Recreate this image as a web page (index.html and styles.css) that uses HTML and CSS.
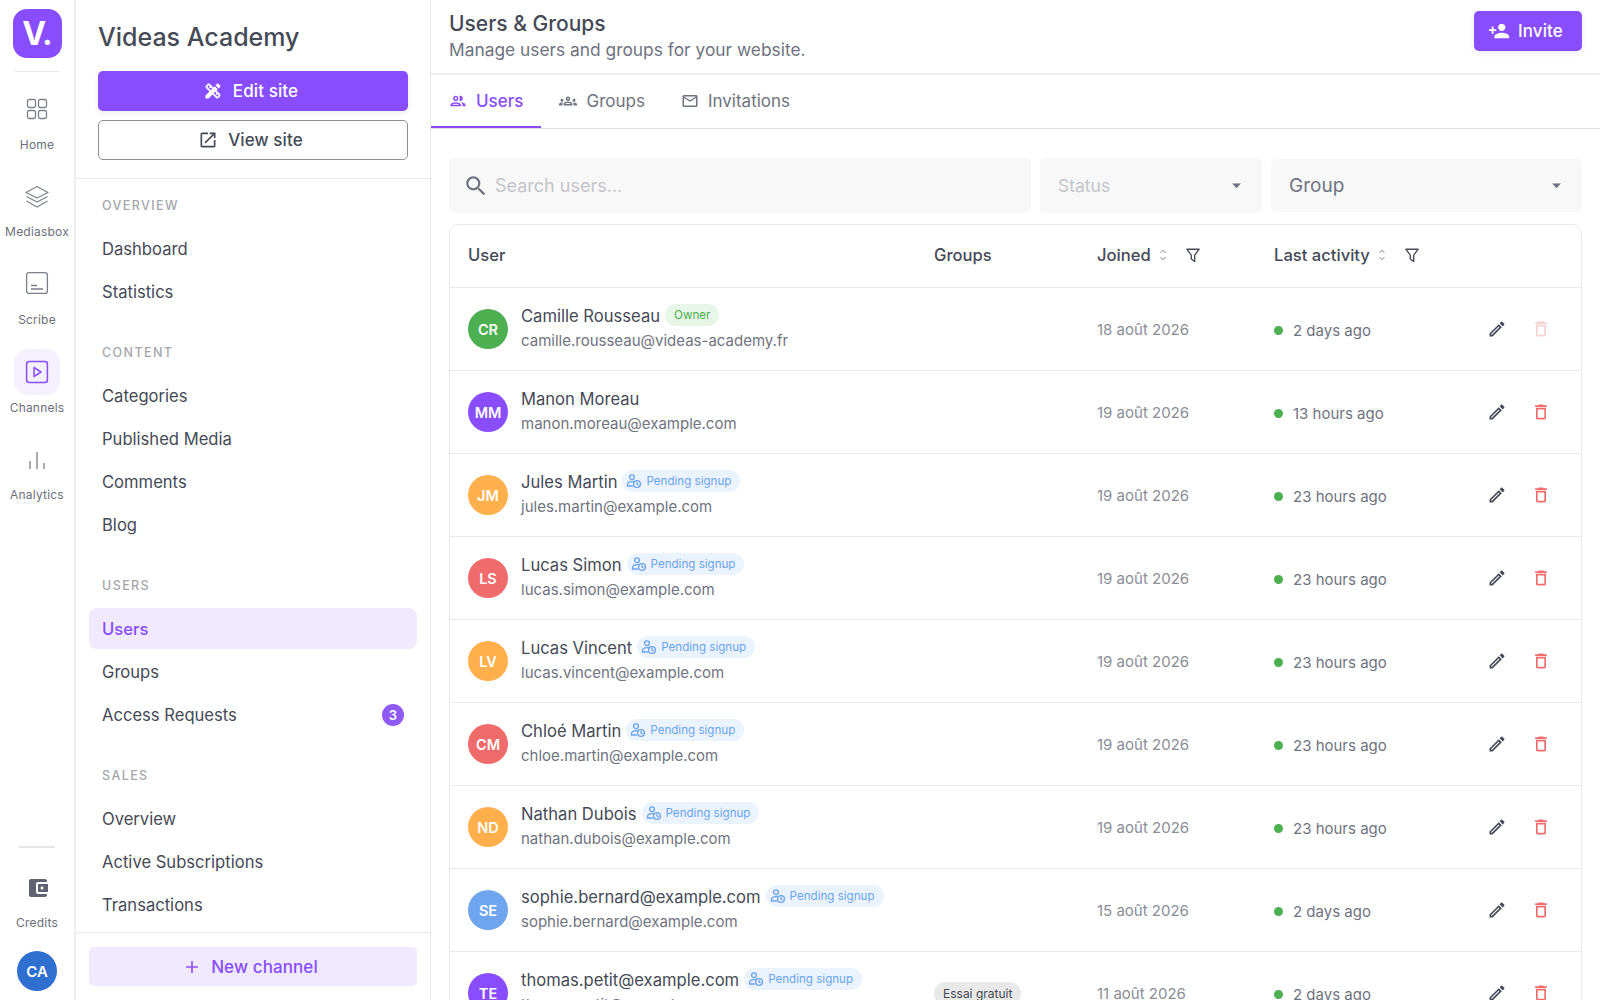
FILE: index.html
```html
<!DOCTYPE html>
<html lang="en">
<head>
  <meta charset="UTF-8">
  <title>Users &amp; Groups</title>
  <link rel="stylesheet" href="styles.css">
</head>
<body>
  <svg class="sprites" width="0" height="0">
    <symbol id="i-edit" viewBox="0 0 24 24"><path d="M3 17.25V21h3.75L17.81 9.94l-3.75-3.75L3 17.25zM5.92 19H5v-.92l9.06-9.06.92.92L5.92 19zM20.71 5.63l-2.34-2.34c-.2-.2-.45-.29-.71-.29s-.51.1-.7.29l-1.83 1.83 3.75 3.75 1.83-1.83c.39-.39.39-1.02 0-1.41z"/></symbol>
    <symbol id="i-trash" viewBox="0 0 24 24"><path d="M6 19c0 1.1.9 2 2 2h8c1.1 0 2-.9 2-2V7H6v12zM8 9h8v10H8V9zm7.5-5l-1-1h-5l-1 1H5v2h14V4h-3.5z"/></symbol>
    <symbol id="i-pending" viewBox="0 0 16 16"><g fill="none" stroke="currentColor" stroke-width="1.35" stroke-linecap="round"><circle cx="6" cy="4.2" r="2.4"/><path d="M1.5 13v-1c0-2 1.8-3.4 4.5-3.4.6 0 1.2.1 1.7.2M1.5 13h5"/><circle cx="11" cy="11" r="3.4"/><path d="M11 9.3V11l1.2.8"/></g></symbol>
    <symbol id="i-sort" viewBox="0 0 10 16"><path d="M2.5 6L5 3.2 7.5 6M2.5 10L5 12.8 7.5 10" fill="none" stroke="currentColor" stroke-width="1"/></symbol>
    <symbol id="i-filter" viewBox="0 0 16 16"><path d="M1.8 2.2h12.4L9.7 8.2v6.3L6.3 12V8.2z" fill="none" stroke="currentColor" stroke-width="1.35" stroke-linejoin="round"/></symbol>
    <symbol id="i-caret" viewBox="0 0 12 6"><path d="M1 0h10L6 5.5z"/></symbol>
  </svg>

  <nav class="rail">
    <div class="logo">V.</div>
    <div class="rail-line"></div>
    <div class="rail-items">
      <a class="rail-item">
        <span class="rail-icon"><svg width="24" height="24" viewBox="0 0 24 24" fill="none" stroke="currentColor" stroke-width="1.3"><rect x="2.5" y="2.5" width="8" height="8" rx="1.8"/><rect x="13.5" y="2.5" width="8" height="8" rx="1.8"/><rect x="2.5" y="13.5" width="8" height="8" rx="1.8"/><rect x="13.5" y="13.5" width="8" height="8" rx="1.8"/></svg></span>
        <span class="rail-label">Home</span>
      </a>
      <a class="rail-item">
        <span class="rail-icon"><svg width="24" height="24" viewBox="0 0 24 24" fill="none" stroke="currentColor" stroke-width="1.2" stroke-linejoin="round"><path d="M12 1.5L23 7.5 12 13 1 7.5z"/><path d="M1.5 11.5L12 17l10.5-5.5"/><path d="M1.5 16L12 22l10.5-6"/></svg></span>
        <span class="rail-label">Mediasbox</span>
      </a>
      <a class="rail-item">
        <span class="rail-icon"><svg class="up" width="24" height="24" viewBox="0 0 24 24" fill="none" stroke="currentColor" stroke-width="1.3"><rect x="1.6" y="1.6" width="20.8" height="20.8" rx="2.5"/><path d="M6 14.5h6M6 18h12"/></svg></span>
        <span class="rail-label">Scribe</span>
      </a>
      <a class="rail-item active">
        <span class="rail-icon"><svg width="24" height="24" viewBox="0 0 24 24" fill="none" stroke="currentColor" stroke-width="1.5" stroke-linejoin="round"><rect x="1.6" y="1.6" width="20.8" height="20.8" rx="2.5"/><path d="M9 7.5l7 4.5-7 4.5z"/></svg></span>
        <span class="rail-label">Channels</span>
      </a>
      <a class="rail-item">
        <span class="rail-icon"><svg width="24" height="24" viewBox="0 0 24 24" fill="none" stroke="currentColor" stroke-width="1.3"><path d="M5 21v-8M12 21V4M19 21v-6"/></svg></span>
        <span class="rail-label">Analytics</span>
      </a>
    </div>
    <div class="rail-bottom">
      <div class="rail-line short"></div>
      <a class="rail-item credits">
        <span class="rail-icon"><svg width="24" height="24" viewBox="0 0 24 24" fill="#5f6470"><path d="M21 18v1c0 1.1-.9 2-2 2H5c-1.11 0-2-.9-2-2V5c0-1.1.89-2 2-2h14c1.1 0 2 .9 2 2v1h-9c-1.11 0-2 .9-2 2v8c0 1.1.89 2 2 2h9zm-9-2h10V8H12v8zm4-2.5c-.83 0-1.5-.67-1.5-1.5s.67-1.5 1.5-1.5 1.5.67 1.5 1.5-.67 1.5-1.5 1.5z"/></svg></span>
        <span class="rail-label">Credits</span>
      </a>
      <div class="me">CA</div>
    </div>
  </nav>

  <aside class="sidebar">
    <div class="site">
      <h2>Videas Academy</h2>
      <button class="btn btn-primary"><svg width="20" height="20" viewBox="0 0 24 24" fill="currentColor"><path d="M16.24 11.51l1.57-1.57-3.75-3.75-1.57 1.57-4.14-4.13c-.78-.78-2.05-.78-2.83 0l-1.9 1.9c-.78.78-.78 2.05 0 2.83l4.13 4.13L3 17.25V21h3.75l4.76-4.76 4.13 4.13c.95.95 2.23.6 2.83 0l1.9-1.9c.78-.78.78-2.05 0-2.83l-4.13-4.13zm-7.06-.44L5.04 6.94l1.89-1.9L8.2 6.31 7.02 7.5l1.41 1.41 1.19-1.19 1.45 1.45-1.89 1.9zm7.88 7.89l-4.13-4.14 1.9-1.9 1.45 1.45-1.19 1.19 1.41 1.41 1.19-1.19 1.27 1.27-1.9 1.91zm3.65-11.92c.39-.39.39-1.02 0-1.41l-2.34-2.34c-.47-.47-1.12-.29-1.41 0l-1.83 1.83 3.75 3.75 1.83-1.83z"/></svg>Edit site</button>
      <button class="btn btn-outline"><svg width="20" height="20" viewBox="0 0 24 24" fill="currentColor"><path d="M19 19H5V5h7V3H5c-1.11 0-2 .9-2 2v14c0 1.1.89 2 2 2h14c1.1 0 2-.9 2-2v-7h-2v7zM14 3v2h3.59l-9.83 9.83 1.41 1.41L19 6.41V10h2V3h-7z"/></svg>View site</button>
    </div>
    <div class="menu">
      <div class="menu-group">
        <div class="menu-title">Overview</div>
        <a class="menu-item">Dashboard</a>
        <a class="menu-item">Statistics</a>
      </div>
      <div class="menu-group">
        <div class="menu-title">Content</div>
        <a class="menu-item">Categories</a>
        <a class="menu-item">Published Media</a>
        <a class="menu-item">Comments</a>
        <a class="menu-item">Blog</a>
      </div>
      <div class="menu-group">
        <div class="menu-title">Users</div>
        <a class="menu-item active">Users</a>
        <a class="menu-item">Groups</a>
        <a class="menu-item">Access Requests <span class="count">3</span></a>
      </div>
      <div class="menu-group">
        <div class="menu-title">Sales</div>
        <a class="menu-item">Overview</a>
        <a class="menu-item">Active Subscriptions</a>
        <a class="menu-item">Transactions</a>
      </div>
    </div>
    <div class="sidebar-foot">
      <button class="btn btn-soft"><svg width="18" height="18" viewBox="0 0 18 18" fill="none" stroke="currentColor" stroke-width="1.6"><path d="M9 3v12M3 9h12"/></svg>New channel</button>
    </div>
  </aside>

  <main class="main">
    <header class="top">
      <div>
        <h1>Users &amp; Groups</h1>
        <p>Manage users and groups for your website.</p>
      </div>
      <button class="btn btn-primary btn-invite"><svg width="22" height="22" viewBox="0 0 24 24" fill="currentColor"><path d="M15 12c2.21 0 4-1.79 4-4s-1.79-4-4-4-4 1.79-4 4 1.79 4 4 4zm-9-2V7H4v3H1v2h3v3h2v-3h3v-2H6zm9 4c-2.67 0-8 1.34-8 4v2h16v-2c0-2.66-5.33-4-8-4z"/></svg>Invite</button>
    </header>

    <div class="tabs">
      <a class="tab active"><svg width="18" height="18" viewBox="0 0 24 24" fill="currentColor"><path d="M9 13.75c-2.34 0-7 1.17-7 3.5V19h14v-1.75c0-2.33-4.66-3.5-7-3.5zM4.34 17c.84-.58 2.87-1.25 4.66-1.25s3.82.67 4.66 1.25H4.34zM9 12c1.93 0 3.5-1.57 3.5-3.5S10.93 5 9 5 5.5 6.57 5.5 8.5 7.07 12 9 12zm0-5c.83 0 1.5.67 1.5 1.5S9.83 10 9 10s-1.5-.67-1.5-1.5S8.17 7 9 7zm7.04 6.81c1.16.84 1.96 1.96 1.96 3.44V19h4v-1.75c0-2.02-3.5-3.17-5.96-3.44zM15 12c1.93 0 3.5-1.57 3.5-3.5S16.93 5 15 5c-.54 0-1.04.13-1.5.35.63.89 1 1.98 1 3.15s-.37 2.26-1 3.15c.46.22.96.35 1.5.35z"/></svg>Users</a>
      <a class="tab"><svg width="18" height="18" viewBox="0 0 24 24" fill="currentColor"><path d="M4 13c1.1 0 2-.9 2-2s-.9-2-2-2-2 .9-2 2 .9 2 2 2zm1.13 1.1c-.37-.06-.74-.1-1.13-.1-.99 0-1.93.21-2.78.58A2.01 2.01 0 0 0 0 16.43V18h4.5v-1.61c0-.83.23-1.61.63-2.29zM20 13c1.1 0 2-.9 2-2s-.9-2-2-2-2 .9-2 2 .9 2 2 2zm4 3.43c0-.81-.48-1.53-1.22-1.85A6.95 6.95 0 0 0 20 14c-.39 0-.76.04-1.13.1.4.68.63 1.46.63 2.29V18H24v-1.57zm-7.76-2.78c-1.17-.52-2.61-.9-4.24-.9s-3.07.39-4.24.9A2.99 2.99 0 0 0 6 16.39V18h12v-1.61c0-1.18-.68-2.26-1.76-2.74zM8.07 16c.09-.23.13-.39.91-.69.97-.38 1.99-.56 3.02-.56s2.05.18 3.02.56c.77.3.81.46.91.69H8.07zM12 8c.55 0 1 .45 1 1s-.45 1-1 1-1-.45-1-1 .45-1 1-1m0-2c-1.66 0-3 1.34-3 3s1.34 3 3 3 3-1.34 3-3-1.34-3-3-3z"/></svg>Groups</a>
      <a class="tab"><svg width="18" height="18" viewBox="0 0 24 24" fill="currentColor"><path d="M20 4H4c-1.1 0-1.99.9-1.99 2L2 18c0 1.1.9 2 2 2h16c1.1 0 2-.9 2-2V6c0-1.1-.9-2-2-2zm0 14H4V8l8 5 8-5v10zm-8-7L4 6h16l-8 5z"/></svg>Invitations</a>
    </div>

    <section class="content">
      <div class="filters">
        <div class="field field-search">
          <svg width="26" height="26" viewBox="0 0 24 24" fill="currentColor"><path d="M15.5 14h-.79l-.28-.27C15.41 12.59 16 11.11 16 9.5 16 5.91 13.09 3 9.5 3S3 5.91 3 9.5 5.91 16 9.5 16c1.61 0 3.09-.59 4.23-1.57l.27.28v.79l5 4.99L20.49 19l-4.99-5zm-6 0C7.01 14 5 11.99 5 9.5S7.01 5 9.5 5 14 7.01 14 9.5 11.99 14 9.5 14z"/></svg>
          <span>Search users...</span>
        </div>
        <div class="field field-status"><span>Status</span><svg class="caret" width="11" height="6" viewBox="0 0 12 6"><use href="#i-caret"/></svg></div>
        <div class="field field-group"><span>Group</span><svg class="caret" width="11" height="6" viewBox="0 0 12 6"><use href="#i-caret"/></svg></div>
      </div>

      <table class="users">
        <colgroup><col class="c-user"><col class="c-groups"><col class="c-joined"><col class="c-last"><col></colgroup>
        <thead>
          <tr>
            <th>User</th>
            <th>Groups</th>
            <th><span class="th-in">Joined <svg class="sort" width="10" height="16"><use href="#i-sort"/></svg><svg class="funnel" width="16" height="16"><use href="#i-filter"/></svg></span></th>
            <th><span class="th-in">Last activity <svg class="sort" width="10" height="16"><use href="#i-sort"/></svg><svg class="funnel" width="16" height="16"><use href="#i-filter"/></svg></span></th>
            <th></th>
          </tr>
        </thead>
        <tbody>
          <tr>
            <td><div class="who"><div class="avatar green">CR</div><div><div class="name">Camille Rousseau <span class="badge owner">Owner</span></div><div class="mail">camille.rousseau@videas-academy.fr</div></div></div></td>
            <td></td>
            <td class="date">18 août 2026</td>
            <td><span class="seen">2 days ago</span></td>
            <td><div class="acts"><svg width="20" height="20"><use href="#i-edit"/></svg><svg class="del off" width="20" height="20"><use href="#i-trash"/></svg></div></td>
          </tr>
          <tr>
            <td><div class="who"><div class="avatar purple">MM</div><div><div class="name">Manon Moreau</div><div class="mail">manon.moreau@example.com</div></div></div></td>
            <td></td>
            <td class="date">19 août 2026</td>
            <td><span class="seen">13 hours ago</span></td>
            <td><div class="acts"><svg width="20" height="20"><use href="#i-edit"/></svg><svg class="del" width="20" height="20"><use href="#i-trash"/></svg></div></td>
          </tr>
          <tr>
            <td><div class="who"><div class="avatar orange">JM</div><div><div class="name">Jules Martin <span class="badge pending"><svg width="16" height="16"><use href="#i-pending"/></svg>Pending signup</span></div><div class="mail">jules.martin@example.com</div></div></div></td>
            <td></td>
            <td class="date">19 août 2026</td>
            <td><span class="seen">23 hours ago</span></td>
            <td><div class="acts"><svg width="20" height="20"><use href="#i-edit"/></svg><svg class="del" width="20" height="20"><use href="#i-trash"/></svg></div></td>
          </tr>
          <tr>
            <td><div class="who"><div class="avatar red">LS</div><div><div class="name">Lucas Simon <span class="badge pending"><svg width="16" height="16"><use href="#i-pending"/></svg>Pending signup</span></div><div class="mail">lucas.simon@example.com</div></div></div></td>
            <td></td>
            <td class="date">19 août 2026</td>
            <td><span class="seen">23 hours ago</span></td>
            <td><div class="acts"><svg width="20" height="20"><use href="#i-edit"/></svg><svg class="del" width="20" height="20"><use href="#i-trash"/></svg></div></td>
          </tr>
          <tr>
            <td><div class="who"><div class="avatar orange">LV</div><div><div class="name">Lucas Vincent <span class="badge pending"><svg width="16" height="16"><use href="#i-pending"/></svg>Pending signup</span></div><div class="mail">lucas.vincent@example.com</div></div></div></td>
            <td></td>
            <td class="date">19 août 2026</td>
            <td><span class="seen">23 hours ago</span></td>
            <td><div class="acts"><svg width="20" height="20"><use href="#i-edit"/></svg><svg class="del" width="20" height="20"><use href="#i-trash"/></svg></div></td>
          </tr>
          <tr>
            <td><div class="who"><div class="avatar red">CM</div><div><div class="name">Chloé Martin <span class="badge pending"><svg width="16" height="16"><use href="#i-pending"/></svg>Pending signup</span></div><div class="mail">chloe.martin@example.com</div></div></div></td>
            <td></td>
            <td class="date">19 août 2026</td>
            <td><span class="seen">23 hours ago</span></td>
            <td><div class="acts"><svg width="20" height="20"><use href="#i-edit"/></svg><svg class="del" width="20" height="20"><use href="#i-trash"/></svg></div></td>
          </tr>
          <tr>
            <td><div class="who"><div class="avatar orange">ND</div><div><div class="name">Nathan Dubois <span class="badge pending"><svg width="16" height="16"><use href="#i-pending"/></svg>Pending signup</span></div><div class="mail">nathan.dubois@example.com</div></div></div></td>
            <td></td>
            <td class="date">19 août 2026</td>
            <td><span class="seen">23 hours ago</span></td>
            <td><div class="acts"><svg width="20" height="20"><use href="#i-edit"/></svg><svg class="del" width="20" height="20"><use href="#i-trash"/></svg></div></td>
          </tr>
          <tr>
            <td><div class="who"><div class="avatar blue">SE</div><div><div class="name">sophie.bernard@example.com <span class="badge pending"><svg width="16" height="16"><use href="#i-pending"/></svg>Pending signup</span></div><div class="mail">sophie.bernard@example.com</div></div></div></td>
            <td></td>
            <td class="date">15 août 2026</td>
            <td><span class="seen">2 days ago</span></td>
            <td><div class="acts"><svg width="20" height="20"><use href="#i-edit"/></svg><svg class="del" width="20" height="20"><use href="#i-trash"/></svg></div></td>
          </tr>
          <tr>
            <td><div class="who"><div class="avatar purple">TE</div><div><div class="name">thomas.petit@example.com <span class="badge pending"><svg width="16" height="16"><use href="#i-pending"/></svg>Pending signup</span></div><div class="mail">thomas.petit@example.com</div></div></div></td>
            <td><span class="chip">Essai gratuit</span></td>
            <td class="date">11 août 2026</td>
            <td><span class="seen">2 days ago</span></td>
            <td><div class="acts"><svg width="20" height="20"><use href="#i-edit"/></svg><svg class="del" width="20" height="20"><use href="#i-trash"/></svg></div></td>
          </tr>
        </tbody>
      </table>
    </section>
  </main>
</body>
</html>
```

FILE: styles.css
```css
* {
  padding: 0;
  margin: 0;
  box-sizing: border-box;
}
:root {
  --purple: #884dff;
  --soft: #f1e9ff;
  --text: #454a57;
  --gray: #6f7380;
  --line: #e9e9ea;
}
html, body {
  height: 100%;
  overflow: hidden;
}
body {
  display: flex;
  font-family: Inter, "Liberation Sans", sans-serif;
  color: var(--text);
  background: #fff;
}
.sprites {
  position: absolute;
}
button {
  border: none;
  font-family: inherit;
  cursor: pointer;
}

/* left rail */
.rail {
  width: 76px;
  flex: none;
  height: 100%;
  border-right: 2px solid #efeff0;
  display: flex;
  flex-direction: column;
  align-items: center;
  padding-top: 9px;
}
.logo {
  width: 49px;
  height: 49px;
  border-radius: 14px;
  background: var(--purple);
  color: #fff;
  font-size: 32px;
  font-weight: 700;
  display: flex;
  justify-content: center;
  align-items: center;
  letter-spacing: -1px;
}
.rail-line {
  width: 44px;
  height: 1px;
  background: #e6e6e8;
  margin: 13px 0 14px;
}
.rail-line.short {
  width: 36px;
  margin: 0 0 25px;
  height: 2px;
}
.rail-items {
  display: flex;
  flex-direction: column;
  gap: 19.2px;
  flex: 1;
}
.rail-item {
  display: flex;
  flex-direction: column;
  align-items: center;
  font-size: 12px;
  line-height: 20px;
  color: #6b6f7a;
  letter-spacing: .2px;
}
.rail-label {
  margin-top: 2.5px;
}
.rail-icon {
  width: 46px;
  height: 46px;
  border-radius: 14px;
  display: flex;
  justify-content: center;
  align-items: center;
  color: #7c808b;
}
.rail-icon .up {
  margin-top: -2px;
}
.rail-item.active .rail-icon {
  background: #f5f0ff;
  color: var(--purple);
}
.rail-bottom {
  display: flex;
  flex-direction: column;
  align-items: center;
  padding-bottom: 9px;
}
.credits {
  margin-bottom: 18px;
}
.credits .rail-icon {
  height: 30px;
  margin-bottom: 8px;
  padding-left: 1px;
}
.me {
  width: 40px;
  height: 40px;
  border-radius: 50%;
  background: #2f6fd0;
  color: #fff;
  font-size: 15px;
  font-weight: 600;
  display: flex;
  justify-content: center;
  align-items: center;
}

/* sidebar */
.sidebar {
  width: 355px;
  flex: none;
  height: 100%;
  border-right: 1px solid var(--line);
  display: flex;
  flex-direction: column;
}
.site {
  padding: 19px 22px 18px;
  border-bottom: 1px solid var(--line);
}
.site h2 {
  font-size: 25px;
  line-height: 36px;
  font-weight: 500;
  margin-bottom: 16px;
}
.btn {
  display: flex;
  justify-content: center;
  align-items: center;
  gap: 10px;
  width: 100%;
  height: 40px;
  padding-right: 5px;
  border-radius: 5px;
  font-size: 17px;
  font-weight: 500;
  letter-spacing: .1px;
}
.btn-primary {
  background: var(--purple);
  color: #fff;
  box-shadow: 0 2px 6px rgba(0, 0, 0, .08);
}
.btn-outline {
  background: #fff;
  color: var(--text);
  border: 1px solid #8b8e97;
  margin-top: 9px;
}
.btn-soft {
  background: var(--soft);
  color: var(--purple);
  height: 39px;
}
.menu {
  flex: 1;
  overflow: hidden;
  padding: 18px 13px 0;
}
.menu-group {
  margin-bottom: 32px;
}
.menu-title {
  padding-left: 13px;
  font-size: 12.5px;
  line-height: 18px;
  font-weight: 500;
  letter-spacing: 1.4px;
  text-transform: uppercase;
  color: #a5a6ac;
  margin-bottom: 13px;
}
.menu-item {
  display: flex;
  align-items: center;
  justify-content: space-between;
  height: 41px;
  margin-bottom: 2px;
  padding: 0 13px;
  border-radius: 8px;
  font-size: 16.6px;
}
.menu-item.active {
  background: var(--soft);
  color: var(--purple);
  font-weight: 500;
}
.count {
  width: 22px;
  height: 22px;
  border-radius: 50%;
  background: #8e59f5;
  color: #fff;
  font-size: 13px;
  font-weight: 600;
  display: flex;
  justify-content: center;
  align-items: center;
}
.sidebar-foot {
  padding: 14px 13px;
  border-top: 1px solid var(--line);
}

/* main */
.main {
  flex: 1;
  min-width: 0;
  height: 100%;
  overflow: hidden;
}
.top {
  height: 75px;
  padding: 11px 18px 0;
  display: flex;
  justify-content: space-between;
  align-items: flex-start;
  border-bottom: 2px solid #efeff0;
}
.top h1 {
  font-size: 21px;
  line-height: 25px;
  font-weight: 500;
}
.top p {
  font-size: 17.35px;
  line-height: 28px;
  color: var(--gray);
}
.btn-invite {
  width: 108px;
  gap: 8px;
}
.tabs {
  display: flex;
  height: 54px;
  border-bottom: 1px solid #dedee0;
}
.tab {
  display: flex;
  align-items: center;
  gap: 9px;
  padding: 0 18px;
  font-size: 17px;
  color: var(--gray);
  border-bottom: 2px solid transparent;
}
.tab.active {
  color: var(--purple);
  font-weight: 500;
  border-bottom-color: var(--purple);
}
.content {
  padding: 29px 18px 0;
}
.filters {
  display: flex;
  gap: 9px;
  align-items: center;
  margin-bottom: 11px;
}
.field {
  height: 55px;
  background: #f8f8f9;
  border-radius: 5px;
  display: flex;
  align-items: center;
  font-size: 18px;
  color: #c3c4c9;
}
.field-search {
  flex: 0 0 582px;
  padding-left: 14px;
  gap: 6px;
}
.field-search svg {
  color: #6f7380;
}
.field-status {
  flex: 0 0 222px;
  padding: 0 20px 0 18px;
  justify-content: space-between;
  font-size: 17.5px;
}
.field-group {
  flex: 1;
  height: 53px;
  padding: 0 20px 0 18px;
  justify-content: space-between;
  color: var(--gray);
  font-size: 19px;
}
.caret {
  fill: #6f7380;
}

/* table */
.users {
  width: 100%;
  table-layout: fixed;
  border-collapse: separate;
  border-spacing: 0;
  border: 1.5px solid var(--line);
  border-radius: 10px;
}
.c-user { width: 466px; }
.c-groups { width: 163px; }
.c-joined { width: 177px; }
.c-last { width: 203px; }
th {
  height: 63px;
  padding: 0 0 2px 18px;
  text-align: left;
  font-size: 16.6px;
  font-weight: 500;
  border-bottom: 1.5px solid var(--line);
}
.th-in {
  display: flex;
  align-items: center;
}
.sort {
  color: #8a8d96;
  margin-left: 7.5px;
  margin-right: 17px;
}
.funnel {
  color: var(--text);
}
td {
  height: 83px;
  padding-left: 18px;
  font-size: 15px;
  border-bottom: 1.5px solid var(--line);
}
.who {
  display: flex;
  align-items: center;
  gap: 13px;
}
.avatar {
  width: 40px;
  height: 40px;
  flex: none;
  border-radius: 50%;
  color: #fff;
  font-size: 14.5px;
  font-weight: 600;
  display: flex;
  justify-content: center;
  align-items: center;
}
.green { background: #4caf50; }
.purple { background: #884dff; }
.orange { background: #ffb04d; }
.red { background: #f06b6b; }
.blue { background: #6ea5ee; }
.name {
  display: flex;
  align-items: center;
  gap: 5px;
  font-size: 16.6px;
  line-height: 22px;
  white-space: nowrap;
}
.mail {
  font-size: 15px;
  line-height: 25px;
  margin-top: 1px;
  color: var(--gray);
  white-space: nowrap;
}
.badge {
  display: inline-flex;
  align-items: center;
  height: 22px;
  border-radius: 11px;
  padding: 0 9px;
  font-size: 11.6px;
  gap: 4px;
  margin-top: -3px;
}
.owner {
  background: #e8f5e9;
  color: #4caf50;
}
.pending {
  background: #ebf3fe;
  color: #6ca3ef;
  padding: 0 9px 0 4px;
}
.chip {
  display: inline-block;
  height: 23px;
  line-height: 23px;
  padding: 0 9px;
  border-radius: 12px;
  background: #e9e9ea;
  font-size: 12px;
}
.date {
  font-size: 15px;
  color: #8a8d96;
}
.seen {
  display: flex;
  align-items: center;
  gap: 10px;
  margin-top: 2px;
  color: var(--gray);
  font-size: 15px;
}
.seen::before {
  content: "";
  width: 9px;
  height: 9px;
  border-radius: 50%;
  background: #4caf50;
}
.acts {
  display: flex;
  gap: 24px;
  padding-left: 10px;
  fill: var(--text);
}
.del {
  fill: #f06b6b;
}
.del.off {
  opacity: .3;
}
```
